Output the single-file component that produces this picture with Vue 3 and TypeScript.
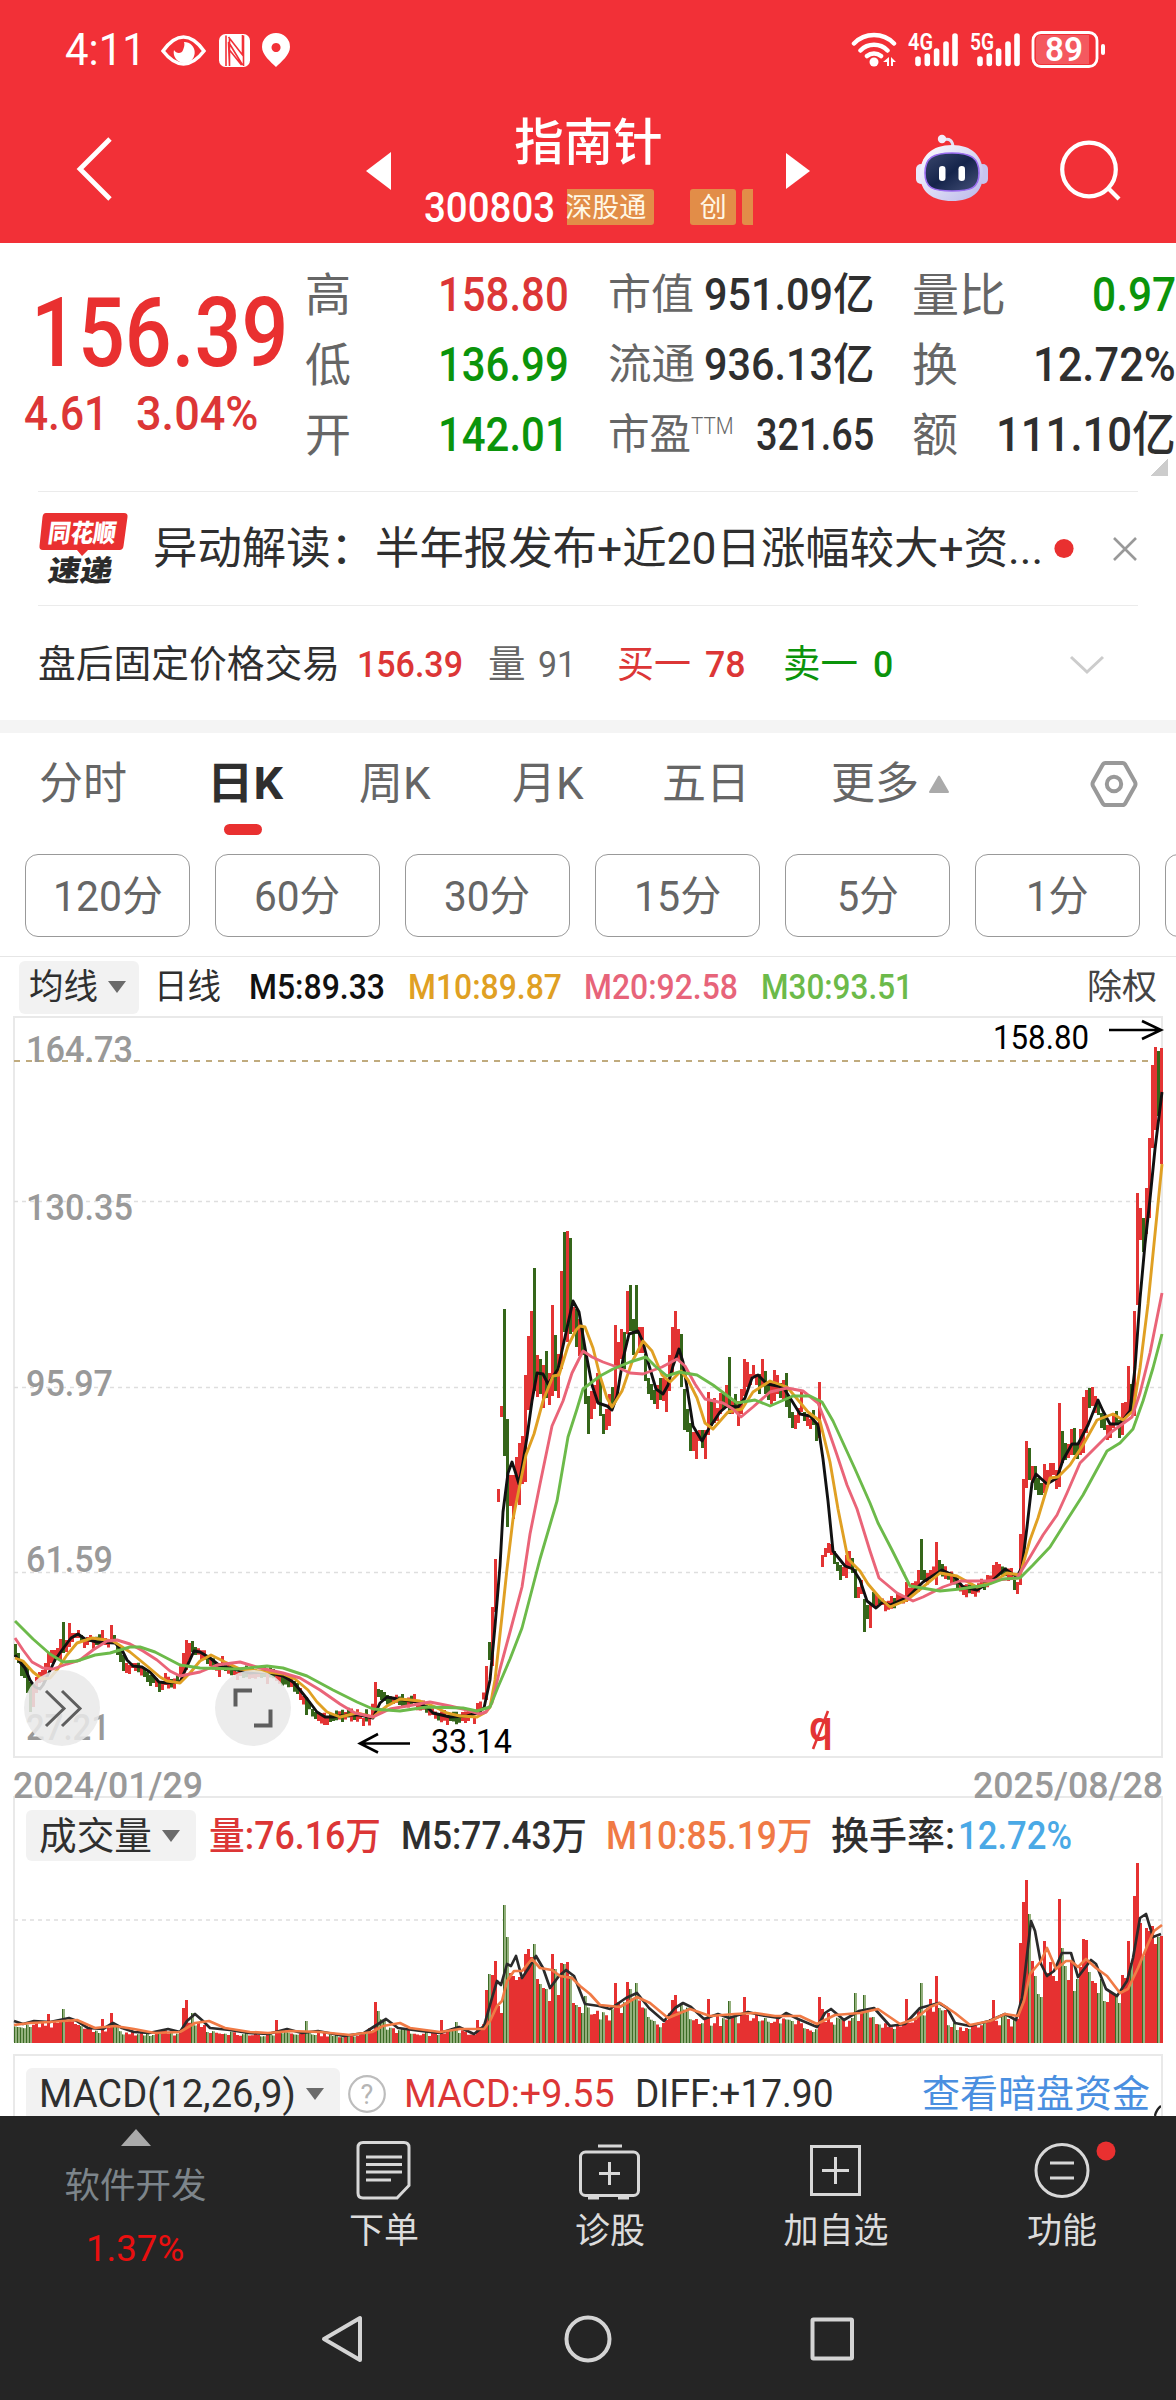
<script setup lang="ts">
import type { Directive } from 'vue'

type Point = [number, number]
interface Bar { x: number; top: number; bottom: number; up: boolean }

/* Condenses a single line of text to the given advance width. */
const vFit: Directive<HTMLElement, number> = {
  mounted(el, binding) {
    const natural = el.offsetWidth
    const right = binding.arg === 'right'
    el.style.transformOrigin = right ? 'right center' : 'left center'
    el.style.transform = `scaleX(${binding.value / natural})`
    const delta = `${binding.value - natural}px`
    if (right) el.style.marginLeft = delta
    else el.style.marginRight = delta
  },
}

const quotes = [
  ['高', 46, '158.80', 131, 'up', '市值', 86, '951.09亿', 170, '量比', 94, '0.97', 84, 'down'],
  ['低', 46, '136.99', 131, 'down', '流通', 87, '936.13亿', 170, '换', 46, '12.72%', 143, 'dark'],
  ['开', 46, '142.01', 131, 'down', '市盈', 83, '321.65', 118, '额', 46, '111.10亿', 180, 'dark'],
] as const

const chips: [string, number][] = [
  ['120分', 110], ['60分', 86], ['30分', 86], ['15分', 87], ['5分', 62], ['1分', 63],
]

const parse = (s: string): Point[] =>
  s.trim().split(/\s+/).map((p) => p.split(',').map(Number) as Point)

const ma5 = parse(`15,1655 20,1662 25,1668 30,1680 35,1687 40,1689 43,1685 47,1677 55,1660 62,1650 71,1638 78,1634 85,1639 97,1642 115,1643
122,1650 127,1660 133,1666 142,1667 150,1672 159,1682 167,1683 180,1682 184,1673 189,1662 194,1651 200,1652 210,1658 220,1666 233,1669
250,1673 267,1672 283,1676 293,1682 300,1690 308,1700 317,1712 325,1717 333,1717 347,1715 360,1715 373,1718 380,1703 387,1697 397,1699
417,1702 427,1707 433,1713 450,1717 467,1716 477,1713 484,1708 490,1680 495,1626 500,1566 503,1512 508,1473 512,1462 515,1471 519,1484
523,1462 527,1437 532,1401 537,1373 543,1374 548,1384 558,1369 565,1337 573,1301 579,1312 585,1348 592,1385 598,1403 607,1406 612,1410
617,1396 623,1359 629,1334 638,1331 643,1342 648,1362 656,1389 663,1394 668,1385 673,1366 679,1349 683,1362 688,1394 693,1426 702,1441
708,1430 720,1412 727,1406 738,1407 745,1398 752,1378 758,1375 767,1384 783,1387 792,1401 800,1414 810,1416 818,1425 823,1459 828,1501
833,1551 845,1566 853,1569 860,1580 867,1601 876,1608 883,1602 890,1605 908,1597 923,1582 942,1570 953,1575 963,1587 977,1590 993,1580
1005,1569 1017,1577 1022,1567 1027,1527 1032,1483 1036,1474 1047,1484 1057,1478 1063,1460 1072,1444 1078,1444 1088,1425 1098,1400
1103,1411 1110,1424 1120,1424 1130,1411 1135,1368 1140,1299 1145,1244 1150,1199 1155,1149 1162,1092`)

const ma10 = parse(`15,1658 23,1661 33,1672 42,1679 50,1678 57,1670 67,1655 77,1643 92,1638 113,1641 130,1652 147,1666 160,1677 167,1681
180,1683 190,1673 200,1661 211,1655 225,1662 240,1669 267,1672 283,1674 295,1679 308,1690 317,1702 327,1712 340,1717 357,1713 373,1717
387,1706 400,1699 420,1701 433,1706 447,1713 460,1716 477,1717 486,1712 490,1707 495,1680 502,1616 507,1569 513,1519 520,1484 526,1455
534,1434 543,1401 553,1376 559,1375 568,1346 576,1330 580,1326 585,1327 593,1348 600,1376 607,1398 612,1407 622,1391 632,1362 643,1341
652,1351 662,1375 670,1382 681,1371 688,1380 697,1398 705,1423 713,1429 728,1412 742,1409 753,1392 770,1381 787,1387 798,1400 808,1412
820,1421 830,1462 838,1509 848,1559 860,1571 868,1584 880,1598 890,1607 907,1600 923,1587 940,1573 957,1576 977,1587 993,1582 1007,1573
1020,1575 1030,1540 1038,1518 1050,1478 1058,1477 1070,1465 1083,1445 1097,1420 1113,1414 1123,1420 1133,1411 1140,1368 1148,1304
1155,1234 1162,1164`)

const ma20 = parse(`15,1638 23,1650 32,1662 43,1668 53,1669 67,1664 80,1660 93,1650 107,1641 117,1640 130,1644 143,1651 157,1660 170,1671
180,1676 200,1672 217,1665 240,1662 260,1668 283,1673 300,1678 320,1690 340,1704 355,1713 373,1717 390,1709 413,1705 430,1702 450,1706
467,1710 480,1714 486,1712 492,1703 500,1669 510,1632 522,1587 530,1534 540,1484 552,1426 563,1401 572,1373 583,1351 592,1357 603,1362
617,1367 630,1373 643,1374 662,1367 677,1359 685,1366 695,1384 705,1399 723,1403 733,1409 741,1417 753,1407 770,1392 787,1388 803,1391
818,1403 827,1426 837,1455 847,1485 857,1509 870,1551 879,1578 897,1593 913,1601 923,1597 943,1587 960,1581 987,1581 1017,1578 1030,1557
1043,1535 1057,1515 1067,1493 1080,1463 1093,1450 1110,1433 1132,1417 1140,1393 1150,1353 1162,1293`)

const ma30 = parse(`15,1621 33,1639 50,1654 63,1662 77,1661 95,1655 110,1653 130,1647 140,1647 155,1652 180,1665 200,1668 237,1669 267,1666
283,1668 307,1676 333,1690 357,1702 373,1709 400,1711 427,1707 463,1708 477,1711 490,1707 498,1687 510,1659 522,1628 540,1559 557,1501
568,1437 577,1409 583,1389 600,1376 613,1369 630,1362 646,1357 655,1366 667,1376 679,1372 697,1375 713,1385 737,1403 755,1400 770,1406
793,1396 810,1396 822,1402 833,1421 855,1469 870,1503 878,1523 892,1550 910,1586 940,1591 960,1589 987,1585 1003,1579 1020,1578
1033,1565 1050,1547 1067,1520 1083,1495 1107,1451 1120,1443 1133,1429 1143,1401 1153,1368 1162,1334`)

/* x, high, low, 1 = up / 0 = down */
const notable = `14,1644,1657,0 17,1653,1663,0 20,1660,1676,0 23,1663,1678,0 26,1667,1693,0 29,1682,1712,0 32,1685,1707,1 35,1677,1693,1
38,1672,1683,1 41,1670,1682,1 44,1663,1677,1 47,1652,1670,1 50,1650,1663,1 53,1650,1662,1 56,1648,1658,1 59,1639,1660,1 62,1622,1653,0
65,1640,1652,1 68,1623,1647,1 71,1633,1642,1 74,1633,1638,1 77,1630,1638,1 80,1635,1642,0 83,1640,1648,1 86,1637,1645,1 89,1635,1642,1
101,1630,1643,1 110,1625,1642,1 113,1635,1643,0 116,1645,1655,0 119,1650,1662,0 122,1655,1671,0 125,1663,1673,1 128,1665,1674,1
131,1663,1668,1 143,1668,1677,0 146,1672,1682,0 149,1675,1686,0 155,1678,1687,1 158,1682,1692,0 161,1682,1690,1 164,1673,1685,1
182,1653,1680,1 185,1640,1670,1 188,1643,1660,1 191,1641,1652,0 194,1647,1655,0 218,1663,1677,1 221,1656,1665,1 236,1672,1680,1
266,1673,1684,1 290,1677,1687,1 296,1683,1694,0 299,1688,1700,1 305,1697,1715,0 317,1713,1721,1 326,1718,1725,1 362,1718,1726,1
374,1682,1713,1 377,1689,1697,0 380,1690,1700,0 383,1692,1701,0 413,1694,1703,1 446,1715,1725,1 473,1717,1724,1 476,1703,1712,1
485,1666,1700,1 488,1642,1660,0 491,1607,1666,1 494,1559,1612,1 497,1489,1502,1 500,1406,1417,1 503,1309,1456,0 506,1419,1527,0
509,1475,1506,1 512,1475,1519,1 515,1457,1501,1 518,1443,1505,1 521,1436,1484,1 524,1375,1482,1 527,1336,1410,1 530,1311,1405,1
533,1268,1391,0 536,1355,1397,1 539,1359,1394,0 542,1365,1408,1 545,1351,1398,0 548,1373,1405,1 551,1305,1396,1 554,1335,1391,0
557,1354,1398,1 560,1271,1369,1 563,1232,1332,0 566,1231,1342,1 569,1238,1334,0 572,1307,1332,1 575,1309,1347,0 578,1319,1356,1
581,1326,1355,0 584,1351,1404,0 587,1396,1434,0 590,1391,1419,1 593,1385,1409,1 596,1373,1403,1 599,1378,1416,0 602,1414,1434,0
605,1409,1430,1 608,1394,1426,1 611,1387,1409,0 614,1325,1401,1 617,1342,1367,1 620,1329,1359,1 623,1332,1369,0 626,1291,1334,1
629,1285,1331,0 632,1319,1355,0 635,1285,1334,0 638,1327,1353,1 641,1327,1353,1 644,1354,1381,0 647,1378,1394,0 650,1384,1400,0
653,1390,1404,0 656,1385,1409,1 659,1378,1400,0 662,1378,1401,1 665,1380,1412,1 668,1355,1391,1 671,1327,1373,1 674,1311,1359,1
677,1329,1360,1 680,1334,1387,0 683,1389,1430,0 686,1409,1432,0 689,1423,1451,0 692,1432,1451,1 695,1432,1459,1 698,1430,1441,1
701,1430,1448,0 704,1430,1459,1 707,1392,1435,1 710,1400,1426,0 713,1398,1423,1 716,1408,1421,1 719,1393,1414,1 722,1394,1409,0
725,1385,1407,1 728,1357,1414,0 731,1401,1414,1 734,1394,1410,0 737,1401,1426,1 740,1389,1414,1 743,1359,1396,1 746,1362,1387,1
749,1374,1385,1 752,1365,1376,1 755,1374,1385,1 758,1374,1394,0 761,1359,1387,1 764,1371,1394,0 767,1382,1400,0 770,1383,1404,1
773,1370,1401,1 776,1375,1394,1 779,1383,1398,0 782,1380,1400,1 785,1373,1407,0 788,1396,1418,0 791,1412,1428,0 794,1415,1429,1
797,1408,1423,1 800,1391,1412,1 803,1412,1421,0 806,1415,1426,1 809,1419,1429,1 812,1410,1425,0 815,1423,1441,0 818,1382,1438,1
821,1555,1567,1 824,1548,1557,1 827,1543,1553,1 830,1544,1555,1 833,1551,1564,0 836,1562,1571,0 839,1565,1580,0 842,1567,1576,1
845,1555,1578,1 848,1551,1569,1 851,1558,1573,0 854,1569,1598,0 857,1587,1598,1 860,1580,1594,1 863,1599,1632,0 866,1605,1619,0
869,1603,1628,1 872,1592,1605,0 875,1594,1607,1 878,1597,1604,0 905,1582,1602,1 917,1570,1592,1 920,1539,1580,0 923,1570,1582,0
935,1542,1585,1 938,1560,1572,0 992,1565,1580,1 995,1562,1580,1 1013,1580,1590,0 1016,1582,1594,1 1019,1534,1585,1 1022,1479,1567,1
1025,1441,1488,1 1028,1448,1480,0 1031,1466,1483,1 1034,1466,1490,0 1037,1478,1495,0 1040,1483,1495,0 1043,1464,1493,1 1046,1470,1485,1
1049,1463,1478,1 1052,1463,1475,1 1055,1470,1489,1 1058,1403,1487,1 1061,1431,1463,0 1064,1443,1460,0 1067,1444,1458,1 1070,1429,1455,1
1073,1428,1455,0 1076,1443,1459,0 1079,1429,1455,1 1082,1397,1453,1 1085,1390,1433,1 1088,1388,1408,0 1091,1387,1406,1 1094,1396,1413,1
1097,1401,1415,0 1100,1413,1428,0 1103,1415,1430,0 1106,1425,1440,1 1109,1423,1438,1 1112,1413,1428,1 1115,1411,1423,0 1118,1420,1438,0
1121,1403,1435,1 1124,1402,1418,1 1127,1366,1413,1 1130,1384,1411,0 1133,1311,1416,1 1136,1193,1305,1 1139,1208,1240,1 1142,1218,1252,0
1145,1188,1234,1 1148,1138,1218,1 1151,1065,1148,1 1154,1047,1130,1 1157,1051,1116,0 1160,1048,1164,1`

const volMa5 = parse(`14,2020 23,2023 34,2020 50,2021 69,2017 77,2020 88,2027 103,2028 113,2022 122,2027 134,2031 149,2032 168,2028 180,2031
187,2020 195,2013 203,2020 210,2027 230,2029 249,2032 268,2033 287,2028 302,2032 318,2030 344,2035 364,2032 375,2025 386,2018 398,2027
421,2030 440,2032 459,2026 474,2033 484,2025 492,1997 497,1980 501,1984 507,1963 511,1965 516,1955 522,1977 528,1968 536,1955 543,1967
550,1987 559,1975 566,1969 574,1975 585,2003 599,2005 610,2008 626,1997 637,1992 649,2007 664,2020 675,2007 683,2002 691,2006 704,2018
718,2013 729,2017 748,2011 760,2014 779,2017 786,2012 798,2018 817,2026 825,2012 831,2008 844,2019 859,2010 874,2007 890,2025 905,2023
920,2007 939,2002 947,2007 955,2022 970,2025 989,2020 1005,2013 1016,2019 1022,1997 1026,1963 1031,1920 1035,1930 1041,1963 1047,1975
1054,1970 1062,1952 1071,1952 1078,1976 1091,1959 1096,1963 1106,1988 1117,1995 1127,1980 1133,1957 1140,1917 1146,1913 1153,1936 1161,1933`)

const volMa10 = parse(`14,2024 30,2022 50,2021 77,2019 95,2027 115,2025 134,2028 155,2032 180,2031 195,2022 209,2020 225,2027 250,2031
268,2032 290,2030 320,2031 350,2034 372,2031 383,2025 400,2022 410,2027 440,2031 460,2028 484,2028 490,2020 497,2005 502,2000 507,1980
514,1970 522,1970 532,1958 540,1967 552,1969 560,1975 572,1977 580,1985 590,1993 600,2004 620,2006 637,1996 650,2002 668,2017 690,2008
710,2015 735,2013 755,2012 775,2015 800,2015 817,2023 835,2014 860,2012 878,2008 900,2023 915,2018 930,2006 940,2002 955,2012 970,2024
990,2020 1005,2013 1018,2015 1024,2000 1030,1973 1041,1960 1047,1947 1056,1968 1066,1960 1071,1960 1078,1966 1086,1958 1096,1967
1107,1975 1120,1992 1128,1988 1138,1967 1148,1943 1154,1930 1162,1924`)

const volPeaks = parse(`47,2013 62,2008 101,2018 110,2012 182,2007 185,1999 275,2019 305,2020 374,2001 377,2010 440,2019 455,2021 476,2019
485,1989 488,1973 491,1974 494,1960 497,2005 500,2012 503,1904 506,1936 509,1972 512,1975 515,1979 518,1976 521,1976 524,1953 527,1948 530,1956
533,1943 536,1978 539,1983 542,1987 545,1988 548,2000 551,1953 554,1968 557,1994 560,1962 563,1963 566,1961 569,1975 572,2002 575,2004
578,2006 581,2012 584,1995 614,1982 626,1981 629,1988 635,1982 671,1999 674,1994 707,1998 728,2000 743,1996 818,1996 821,2008 854,1992
863,1994 905,1998 920,1982 929,1998 935,1975 992,1999 1019,1942 1022,1901 1025,1879 1028,1913 1031,1960 1034,1975 1037,1993 1040,1996
1043,1940 1046,1972 1049,1961 1052,1975 1055,1980 1058,1898 1061,1947 1064,1965 1067,1979 1070,1960 1073,1990 1076,1978 1079,1966
1082,1938 1085,1939 1088,1971 1091,1980 1094,1982 1097,1992 1100,1978 1103,2000 1106,2001 1109,1990 1112,1992 1115,1995 1118,2002
1121,1974 1124,1977 1127,1940 1130,1962 1133,1895 1136,1862 1139,1922 1142,1955 1145,1927 1148,1930 1151,1925 1154,1943 1157,1936 1160,1935`)

function at(line: Point[], x: number): number {
  if (x <= line[0][0]) return line[0][1]
  for (let i = 1; i < line.length; i++) {
    const [x1, y1] = line[i]
    if (x <= x1) {
      const [x0, y0] = line[i - 1]
      return y0 + ((y1 - y0) * (x - x0)) / (x1 - x0)
    }
  }
  return line[line.length - 1][1]
}

const noise = (i: number): number => {
  const v = Math.sin(i * 127.1 + 11.7) * 43758.5453
  return v - Math.floor(v)
}

const BAR = 3
const slot = (x: number) => Math.round((x - 14) / BAR)

const fixed = new Map<number, Bar>()
for (const [x, top, bottom, up] of notable.split(/\s+/).map((r) => r.split(',').map(Number))) {
  fixed.set(slot(x), { x, top, bottom, up: up === 1 })
}
const peaks = new Map<number, number>(volPeaks.map(([x, y]) => [slot(x), y]))

const candles: Bar[] = []
const volumes: Bar[] = []
for (let i = 0; i < 383; i++) {
  const x = 14 + i * BAR
  const y = at(ma5, x + 5)
  const rising = at(ma5, x + 8) < at(ma5, x + 2)
  const half = 3 + noise(i) * 3.5
  const mid = y + (noise(i + 900) - 0.5) * 5
  const bar = fixed.get(i) ?? {
    x, top: mid - half, bottom: mid + half, up: noise(i + 400) < (rising ? 0.75 : 0.45),
  }
  candles.push({ ...bar, x })
  const level = 2042 - at(volMa5, x + 4)
  const top = peaks.get(i) ?? 2042 - level * (0.62 + noise(i + 70) * 0.42)
  volumes.push({ x, top, bottom: 2042, up: bar.up })
}

const path = (line: Point[]) => line.map(([x, y]) => `${x},${y}`).join(' ')

const areas = (bars: Bar[], up: boolean, w: number) =>
  bars.filter((b) => b.up === up)
    .map((b) => `M${b.x} ${b.top.toFixed(1)}h${w}V${b.bottom.toFixed(1)}h${-w}z`).join('')

const scale = [
  ['164.73', 1062, 107], ['130.35', 1220, 107], ['95.97', 1396, 87], ['61.59', 1572, 87], ['27.21', 1740, 84],
] as const
</script>

<template>
  <div class="screen">
    <header class="top">
      <div class="status">
        <span v-fit="81" class="clock">4:11</span>
        <svg class="st-left" width="132" height="40" viewBox="160 29 132 40">
          <path d="M163 50Q173 36 183.500 36T204 50Q194 63 183.500 63T163 50Z" fill="none" stroke="#fff" stroke-width="3.500" />
          <path d="M184 41a10.500 10.500 0 1 1-10 8c2 4 8 4 9 0c1-3 2-5 1-8z" fill="#fff" />
          <rect x="219" y="33" width="31" height="33" rx="6.500" fill="#fff" />
          <path d="M226 34.500V65M243.500 34.500V65M229.500 37v28l-1-24l14 23M228.500 36l14 18v-20M229.500 49l12 15" fill="none" stroke="#f23037" stroke-width="1.600" />
          <path fill-rule="evenodd" d="M276 32a14 14 0 0 1 14 14c0 8-9 15-14 20c-5-5-14-12-14-20a14 14 0 0 1 14-14zm0 10a4.500 4.500 0 1 0 .1 0z" fill="#fff" />
        </svg>
        <svg class="st-right" width="256" height="44" viewBox="851 28 256 44">
          <g fill="none" stroke="#fff" stroke-width="4.500" stroke-linecap="round">
            <path d="M854 43.500a28 28 0 0 1 40 0M860.500 50.500a19 19 0 0 1 27 0M867 56a11 11 0 0 1 14 0" />
          </g>
          <circle cx="874" cy="62" r="4.500" fill="#fff" />
          <path d="M889 57v9h-2v-4h-4zM891 57l5 5h-3v4h-2z" fill="#fff" />
          <text x="908" y="50" textLength="25" lengthAdjust="spacingAndGlyphs" class="net">4G</text>
          <text x="970" y="50" textLength="24" lengthAdjust="spacingAndGlyphs" class="net">5G</text>
          <g stroke="#fff" stroke-width="5.600" stroke-linecap="round">
            <path d="M918 59v4.500M927.300 56v7.500M936.600 51v12.500M946 44v19.500M955 36v27.500" />
            <path d="M980 59v4.500M989.300 56v7.500M998.600 51v12.500M1008 44v19.500M1017 36v27.500" />
          </g>
          <rect x="1033" y="32.500" width="64" height="34" rx="8" fill="none" stroke="#fff" stroke-width="2.800" />
          <path d="M1041 35h48v29h-48q-5 0-5-5V40q0-5 5-5z" fill="#fff" opacity=".2" />
          <rect x="1101" y="44" width="4" height="11" rx="2" fill="#fff" />
          <text x="1045" y="61" textLength="38" lengthAdjust="spacingAndGlyphs" class="bat">89</text>
        </svg>
      </div>
      <div class="bar">
        <svg width="340" height="145" viewBox="0 98 340 145"><path d="M110 139L80 169L110 199" fill="none" stroke="#fff" stroke-width="4.800" /></svg>
        <svg width="51" height="145" viewBox="340 98 51 145"><path d="M391 152v38l-25-19z" fill="#fff" /></svg>
        <div class="title">
          <h1>指南针</h1>
          <div class="sub">
            <span v-fit="131" class="code">300803</span>
            <span class="tag wide">深股通</span>
            <span class="tag one">创</span>
            <span class="tag cut"></span>
          </div>
        </div>
        <svg width="54" height="145" viewBox="786 98 54 145"><path d="M786 153v36l24-18z" fill="#fff" /></svg>
        <svg width="200" height="145" viewBox="840 98 200 145">
          <defs>
            <linearGradient id="shell" x1="0" y1="0" x2="1" y2="1"><stop offset="0" stop-color="#fff" /><stop offset="1" stop-color="#b9b6ea" /></linearGradient>
            <linearGradient id="visor" x1="0" y1="0" x2="1" y2="1"><stop offset="0" stop-color="#3a476c" /><stop offset=".5" stop-color="#15244b" /><stop offset="1" stop-color="#465279" /></linearGradient>
          </defs>
          <path d="M943 140q10-3 10 8" fill="none" stroke="#e4e2f6" stroke-width="3" />
          <circle cx="942" cy="139" r="4.200" fill="#f3ecfa" />
          <rect x="916" y="164" width="10" height="20" rx="5" fill="#e9e8fa" />
          <rect x="978" y="164" width="10" height="20" rx="5" fill="#c7c4ee" />
          <path d="M952 145c20 0 31 11 31 29s-11 27-31 27s-32-9-32-27s12-29 32-29z" fill="url(#shell)" />
          <path d="M952 153c19 0 27 5 27 20s-8 18-27 18s-27-3-27-18s8-20 27-20z" fill="url(#visor)" stroke="#9b6df0" stroke-width="1.600" />
          <rect x="939" y="166" width="6.500" height="15" rx="3.200" fill="#fff" /><rect x="958.500" y="166" width="6.500" height="15" rx="3.200" fill="#fff" />
        </svg>
        <svg width="136" height="145" viewBox="1040 98 136 145"><g fill="none" stroke="#fff" stroke-width="4.200"><circle cx="1089" cy="169.500" r="26.800" /><path d="M1108 188l11 11" /></g></svg>
      </div>
    </header>

    <section class="quote">
      <div class="last">
        <span v-fit="257" class="price">156.39</span>
        <div class="chg"><span v-fit="84">4.61</span><span v-fit="123">3.04%</span></div>
      </div>
      <div class="grid">
        <template v-for="q in quotes" :key="q[0]">
          <span v-fit="q[1]" class="lab">{{ q[0] }}</span>
          <span v-fit:right="q[3]" class="val" :class="q[4]">{{ q[2] }}</span>
          <span class="lab mid"><b v-fit="q[6]">{{ q[5] }}</b><i v-if="q[5] === '市盈'" v-fit="43">TTM</i></span>
          <span v-fit:right="q[8]" class="val small dark">{{ q[7] }}</span>
          <span v-fit="q[10]" class="lab end">{{ q[9] }}</span>
          <span v-fit:right="q[12]" class="val" :class="q[13]">{{ q[11] }}</span>
        </template>
      </div>
      <i class="corner"></i>
    </section>

    <section class="news">
      <svg width="115" height="112" viewBox="38 492 115 112">
        <path d="M46 512h78q4 0 3.500 4l-4 29q-.5 4-4 4H88l-6 6l-5-6H43q-4 0-3.500-4l3-29q.5-4 3.500-4z" fill="#e93030" />
        <text transform="translate(47 541) skewX(-8)" textLength="68" lengthAdjust="spacingAndGlyphs" font-size="25" font-weight="900" fill="#fff">同花顺</text>
        <text transform="translate(47 580) skewX(-10)" textLength="64" lengthAdjust="spacingAndGlyphs" font-size="29" font-weight="900" fill="#2b2b2b">速递</text>
      </svg>
      <span v-fit="890" class="headline">异动解读：半年报发布+近20日涨幅较大+资...</span>
      <svg width="95" height="112" viewBox="1043 492 95 112"><circle cx="1064" cy="547.500" r="9.600" fill="#e93030" /><path d="M1114 537l22 22M1136 537l-22 22" stroke="#999" stroke-width="2.600" /></svg>
    </section>

    <section class="after">
      <span v-fit="302">盘后固定价格交易</span>
      <span v-fit="106" class="up m">156.39</span>
      <span class="grey">量</span>
      <span v-fit="38" class="grey">91</span>
      <span v-fit="74" class="up">买一</span>
      <span v-fit="41" class="up m">78</span>
      <span v-fit="75" class="down">卖一</span>
      <span v-fit="20" class="down m">0</span>
      <svg width="36" height="20" viewBox="0 0 36 20"><path d="M2 2L18 17L34 2" fill="none" stroke="#ccc" stroke-width="3" /></svg>
    </section>

    <nav class="tabs">
      <span>分时</span>
      <span class="on"><b v-fit="76">日K</b></span>
      <span>周K</span>
      <span>月K</span>
      <span>五日</span>
      <span>更多</span>
      <svg width="24" height="20" viewBox="0 0 24 20"><path d="M12 2.500L21 18H3z" fill="#aaa" stroke="#aaa" stroke-width="2" stroke-linejoin="round" /></svg>
      <svg width="50" height="48" viewBox="0 0 50 48"><g fill="none" stroke="#999" stroke-width="4"><path d="M16.500 3h17q2 0 3 2L46 22q1 2 0 4l-9.500 17q-1 2-3 2h-17q-2 0-3-2L4 26q-1-2 0-4l9.500-17q1-2 3-2z" /><circle cx="25" cy="24" r="7.200" /></g></svg>
    </nav>
    <div class="chips">
      <span v-for="c in chips" :key="c[0]" class="chip"><b v-fit="c[1]">{{ c[0] }}</b></span>
      <span class="chip"></span>
    </div>

    <div class="ind">
      <span class="drop"><b v-fit="69">均线</b><i></i></span>
      <span v-fit="67">日线</span>
      <span v-fit="136" class="m black">M5:89.33</span>
      <span v-fit="154" class="m c10">M10:89.87</span>
      <span v-fit="154" class="m c20">M20:92.58</span>
      <span v-fit="152" class="m c30">M30:93.51</span>
      <span v-fit="70" class="ex">除权</span>
    </div>

    <svg class="chart" width="1176" height="780" viewBox="0 1017 1176 780">
      <rect x="14" y="1017" width="1148" height="740" fill="none" stroke="#e9e9e9" stroke-width="2" />
      <path d="M14 1201.500H1162M14 1387.500H1162M14 1572.500H1162" stroke="#dedede" stroke-width="1.400" stroke-dasharray="4 4" />
      <path d="M14 1061H1162" stroke="#c0ab7e" stroke-width="1.800" stroke-dasharray="6 6" />
      <g class="scale">
        <text v-for="s in scale" :key="s[0]" x="26" :y="s[1]" :textLength="s[2]" lengthAdjust="spacingAndGlyphs">{{ s[0] }}</text>
        <text x="13" y="1798" textLength="190" lengthAdjust="spacingAndGlyphs">2024/01/29</text>
        <text x="973" y="1798" textLength="190" lengthAdjust="spacingAndGlyphs">2025/08/28</text>
      </g>
      <path :d="areas(candles, false, 3)" fill="#35661a" />
      <path :d="areas(candles, true, 3)" fill="#e33434" />
      <g fill="none" stroke-width="2.900" stroke-linejoin="round">
        <polyline :points="path(ma5)" stroke="#111" />
        <polyline :points="path(ma10)" stroke="#e0a023" />
        <polyline :points="path(ma20)" stroke="#ea6478" />
        <polyline :points="path(ma30)" stroke="#6cba4a" />
      </g>
      <g class="mark">
        <text x="993" y="1049" textLength="96" lengthAdjust="spacingAndGlyphs">158.80</text>
        <text x="431" y="1753" textLength="81" lengthAdjust="spacingAndGlyphs">33.14</text>
      </g>
      <path d="M1109 1030h51M1142 1021l19 9l-19 9M410 1743.500h-50M378 1734l-18 9.500l18 9" fill="none" stroke="#000" stroke-width="2.600" />
      <text x="809" y="1741" class="rights">q</text>
      <path d="M813 1749L828 1711" stroke="#e33434" stroke-width="2.600" />
      <g fill="#e9e9e9" fill-opacity=".86"><circle cx="62" cy="1708" r="38" /><circle cx="253" cy="1708" r="38" /></g>
      <path d="M46 1691l18 17.500l-18 17.500M62 1691l18 17.500l-18 17.500" fill="none" stroke="#5e5e5e" stroke-width="3" />
      <path d="M252 1690.500h-16.500v16M254 1725.500h16.500v-16" fill="none" stroke="#5e5e5e" stroke-width="4" />
    </svg>

    <section class="vol">
      <div class="row">
        <span class="drop"><b v-fit="113">成交量</b><i></i></span>
        <span v-fit="172" class="up m">量:76.16万</span>
        <span v-fit="186" class="m">M5:77.43万</span>
        <span v-fit="206" class="m orange">M10:85.19万</span>
        <span v-fit="124" class="m">换手率:</span>
        <span v-fit="114" class="m blue">12.72%</span>
      </div>
      <svg width="1148" height="171" viewBox="14 1872 1148 171">
        <path d="M14 1919H1162" stroke="#e6e6e6" stroke-width="2" stroke-dasharray="4 4" />
        <path :d="areas(volumes, false, 3)" fill="#93b07c" />
        <path :d="areas(volumes, false, 1)" fill="#3c6b25" />
        <path :d="areas(volumes, true, 3)" fill="#e63131" />
        <g fill="none" stroke-width="2.700" stroke-linejoin="round">
          <polyline :points="path(volMa5)" stroke="#2b2b2b" />
          <polyline :points="path(volMa10)" stroke="#f07a45" />
        </g>
      </svg>
    </section>

    <section class="macd">
      <div class="row">
        <span class="drop"><b v-fit="257">MACD(12,26,9)</b><i></i></span>
        <svg width="40" height="40" viewBox="0 0 40 40"><circle cx="20" cy="20" r="17.800" fill="none" stroke="#bdbdbd" stroke-width="2.200" /><text x="20" y="29.500" text-anchor="middle" font-size="27" fill="#b5b5b5">?</text></svg>
        <span v-fit="211" class="up">MACD:+9.55</span>
        <span v-fit="199">DIFF:+17.90</span>
        <span v-fit="228" class="link">查看暗盘资金</span>
        <svg class="tip" width="8" height="14" viewBox="0 0 8 14"><path d="M1 13q1-6 6-10" fill="none" stroke="#222" stroke-width="2.400" /></svg>
      </div>
    </section>

    <footer class="foot">
      <div class="actions">
        <div class="index">
          <svg width="30" height="17" viewBox="0 0 30 17"><path d="M15 0L30 17H0z" fill="#aaa" /></svg>
          <span class="iname">软件开发</span>
          <span class="ipct"><b v-fit="98">1.37%</b></span>
        </div>
        <div class="act">
          <svg width="64" height="64" viewBox="352 2138 64 64"><g fill="none" stroke="#d8d8d8" stroke-width="3"><path d="M363 2142.500h41q5 0 5 5v38l-12 12.500h-34q-5 0-5-5v-45.500q0-5 5-5z" /><path d="M366 2157h36M366 2164.500h36M366 2172h36M366 2180h25" /></g></svg>
          <span>下单</span>
        </div>
        <div class="act">
          <svg width="64" height="64" viewBox="578 2138 64 64"><g fill="none" stroke="#d8d8d8" stroke-width="3"><rect x="580.500" y="2152" width="58" height="43.500" rx="5" /><path d="M598 2146h24M588 2198h11M618 2198h11" /><path d="M609.500 2162v23M599 2173.500h21" /></g></svg>
          <span>诊股</span>
        </div>
        <div class="act">
          <svg width="64" height="64" viewBox="804 2138 64 64"><path d="M811.500 2146.500h48v48h-48zM835.500 2157v27M822 2170.500h27" fill="none" stroke="#d8d8d8" stroke-width="3" /></svg>
          <span>加自选</span>
        </div>
        <div class="act">
          <svg width="94" height="64" viewBox="1015 2138 94 64" class="fn"><g fill="none" stroke="#d8d8d8" stroke-width="3"><circle cx="1062" cy="2170.500" r="26" /><path d="M1050 2163h24M1050 2178h24" /></g><circle cx="1106" cy="2151" r="9.500" fill="#e93030" /></svg>
          <span>功能</span>
        </div>
      </div>
      <svg class="keys" width="1176" height="132" viewBox="0 2268 1176 132">
        <g fill="none" stroke="#d4d4d4" stroke-width="4" stroke-linejoin="round"><path d="M360 2318v42L324 2339z" /><circle cx="588" cy="2339" r="21.500" /><rect x="812.500" y="2319.500" width="39.500" height="39" rx="1" /></g>
      </svg>
    </footer>
  </div>
</template>

<style>
body { margin: 0; background: #fff; }
</style>

<style scoped>
.screen { width: 1176px; height: 2400px; overflow: hidden; background: #fff; color: #2f2f2f; font-family: Roboto, "Noto Sans CJK SC", sans-serif; line-height: 1; }
.screen * { box-sizing: border-box; }
span, b, h1 { white-space: nowrap; }
svg { display: block; flex: none; }
b { font-weight: inherit; display: inline-block; }
i { font-style: normal; }
.up { color: #dc3636 !important; }
.down { color: #0b940b !important; }
.dark { color: #2f2f2f; }
.m { font-weight: 500; }

.top { height: 243px; background: #f23037; color: #fff; }
.status { display: flex; align-items: center; height: 98px; padding: 1px 0 0 65px; }
.clock { flex: none; padding-top: 1px; font-size: 45px; font-weight: 400; line-height: 50px; }
.st-left { margin-left: 14px; }
.st-right { margin-left: 559px; }
.net { font-size: 23px; font-weight: 600; fill: #fff; }
.bat { font-size: 33px; font-weight: 600; fill: #fff; }
.bar { display: flex; height: 145px; }
.title { width: 395px; padding-top: 17px; }
h1 { margin: 0; font-size: 49.500px; font-weight: 500; line-height: 56px; text-align: center; }
.sub { display: flex; align-items: center; height: 36px; margin-top: 18px; padding-left: 33px; }
.code { flex: none; padding-top: 1px; font-size: 42px; font-weight: 500; }
.tag { flex: none; height: 36px; border-radius: 3px; background: #e28d48; font-size: 27px; line-height: 38px; color: #fff8e6; }
.wide { width: 87px; margin-left: 12px; border-radius: 0 3px 3px 0; text-indent: -2px; }
.one { width: 46px; margin-left: 36px; text-align: center; }
.cut { width: 11px; margin-left: 6px; border-radius: 3px 0 0 3px; }

.quote { position: relative; display: flex; height: 248px; }
.last { flex: none; width: 305px; padding-top: 42px; color: #e93030; }
.price { display: inline-block; margin-left: 31px; font-size: 96px; font-weight: 500; line-height: 96px; }
.chg { display: flex; gap: 28px; margin-top: 9px; padding-left: 24px; font-size: 48px; font-weight: 500; line-height: 48px; color: #dc3636; }
.chg span { flex: none; }
.grid { display: grid; grid-template-columns: 60px 204px 39px 121px 145px 38px 100px 164px; grid-auto-rows: 70px; align-items: center; padding-top: 17px; width: 871px; height: 227px; }
.lab { color: #666; font-size: 46px; justify-self: start; }
.lab.mid { grid-column: 4; font-size: 42px; display: flex; }
.mid i { font-size: 23px; font-weight: 300; margin-top: 1px; }
.lab.end { grid-column: 7; }
.val { justify-self: end; font-size: 48px; font-weight: 500; }
.val.small { font-size: 44px; }
.corner { position: absolute; right: 8px; bottom: 15px; width: 18px; height: 18px; background: linear-gradient(135deg, transparent 50%, #ccc 50%); }

.news { display: flex; align-items: center; height: 115px; margin: 0 38px; border-top: 1px solid #ebebeb; border-bottom: 1px solid #ebebeb; }
.headline { flex: none; padding-top: 1px; font-size: 44px; }
.after { display: grid; grid-template-columns: 319px 131px 50px 79px 88px 78px 90px 196px 40px; align-items: center; height: 114px; padding: 3px 0 0 38px; font-size: 37.500px; }
.after span { justify-self: start; }
.grey { color: #666; }

.tabs { display: grid; grid-template-columns: 168px 152px 153px 150px 169px 96px 162px 50px; align-items: center; height: 115px; padding-left: 39px; border-top: 13px solid #f4f4f4; font-size: 44px; color: #666; }
.tabs span { position: relative; line-height: 60px; justify-self: start; }
.on { font-weight: 700; color: #2f2f2f; }
.on::after { content: ""; position: absolute; left: 17px; bottom: -21px; width: 38px; height: 11px; border-radius: 6px; background: #e93030; }
.chips { display: flex; gap: 25px; margin-top: 19px; padding-left: 25px; overflow: hidden; }
.chip { flex: none; width: 165px; height: 83px; border: 1px solid #999; border-radius: 13px; text-align: center; font-size: 42px; line-height: 84px; color: #666; }

.ind { display: grid; grid-template-columns: 135px 95px 159px 176px 177px 326px 80px; align-items: center; height: 60px; margin-top: 19px; padding: 1px 0 0 19px; border-top: 1px solid #e6e6e6; font-size: 35px; }
.ind > span { justify-self: start; }
.drop { display: flex; align-items: center; border-radius: 6px; background: #f2f2f2; }
.drop b { flex: none; }
.drop i { flex: none; border: 9.500px solid transparent; border-top: 12px solid #6b6b6b; border-bottom: 0; margin-left: 10px; }
.ind .drop { width: 120px; height: 53px; padding-left: 10px; }
.black { color: #111; }
.c10 { color: #e0a023; }
.c20 { color: #e7647a; }
.c30 { color: #6cba4a; }
.ex { color: #444; }

.chart { overflow: visible; margin-top: 1px; }
.scale { font-size: 37px; font-weight: 500; fill: #999; }
.mark { font-size: 33px; fill: #000; }
.rights { font-size: 42px; font-weight: 500; fill: #e33434; }

.vol { height: 246px; margin: -1px 13px 0; border: 2px solid #e9e9e9; border-bottom: 0; }
.row { display: grid; align-items: center; font-size: 38px; }
.row > span { justify-self: start; }
.vol .row { height: 75px; grid-template-columns: 183px 192px 205px 225px 127px 120px; padding-left: 11px; }
.vol svg { margin-left: -1px; overflow: visible; }
.vol .drop { width: 170px; height: 51px; padding-left: 13px; }
.orange { color: #f07a45; }
.blue { color: #4aa9e6; }
.macd { height: 62px; margin: 12px 13px 0; border: 2px solid #e9e9e9; border-bottom: 0; overflow: hidden; }
.macd .row { height: 76px; grid-template-columns: 321px 57px 231px 287px 232px 10px; padding-left: 11px; }
.macd .drop { width: 314px; height: 52px; padding-left: 13px; }
.link { color: #4a8fe0; }
.tip { margin-top: 32px; }

.foot { height: 284px; background: #252525; color: #dcdcdc; }
.actions { display: grid; grid-template-columns: 271px 226px 226px 226px 226px; height: 152px; }
.index { display: flex; flex-direction: column; align-items: center; padding-top: 13px; font-size: 35.500px; }
.iname { margin-top: 22px; line-height: 36px; color: #7d858b; }
.ipct { margin-top: 26px; line-height: 38px; color: #ea0f0f; font-size: 37px; }
.act { display: flex; flex-direction: column; align-items: center; padding-top: 22px; font-size: 35px; }
.act span { margin-top: 10px; line-height: 40px; }
.fn { overflow: visible; }
</style>
